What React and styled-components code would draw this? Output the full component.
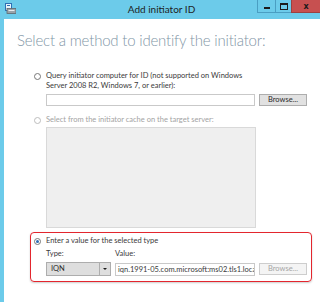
import React from "react";
import styled, { createGlobalStyle } from "styled-components";

const GlobalStyle = createGlobalStyle`
  html, body {
    margin: 0;
    padding: 0;
  }
  body {
    font-family: Lato, "Liberation Sans", sans-serif;
    overflow: hidden;
  }
`;

const Window = styled.div`
  width: 320px;
  height: 302px;
  background: #6ccbea;
  display: flex;
  flex-direction: column;
  overflow: hidden;
`;

const TitleBar = styled.div`
  height: 19px;
  display: grid;
  grid-template-columns: 1fr auto 1fr;
  align-items: start;
`;

const AppIcon = styled.div`
  padding: 3px 0 0 5px;
  line-height: 0;
`;

const Title = styled.div`
  font-size: 10px;
  line-height: 18px;
  color: #1e1e1e;
  padding-left: 3px;
`;

const Controls = styled.div`
  justify-self: end;
  display: flex;
`;

const CaptionButton = styled.div`
  width: ${(p) => p.$w}px;
  height: 13px;
  box-sizing: border-box;
  border: 1px solid ${(p) => (p.$close ? "#9c4141" : "#4a9ec2")};
  border-top: none;
  border-right: none;
  background: ${(p) => (p.$close ? "#c75050" : "#6ccbea")};
  display: flex;
  align-items: center;
  justify-content: center;
  font-family: "DejaVu Sans", sans-serif;
  font-size: 8px;
  font-weight: bold;
  color: #1b1b1b;
`;

const MinGlyph = styled.span`
  width: 6px;
  height: 2px;
  background: #1b1b1b;
  margin-top: 3px;
`;

const MaxGlyph = styled.span`
  width: 6px;
  height: 4px;
  border: 1px solid #1b1b1b;
  border-top-width: 2px;
`;

const Body = styled.div`
  flex: 1;
  margin-left: 4px;
  background: #fff;
  padding: 11px 0 0 13px;
`;

const Heading = styled.div`
  font-weight: 300;
  font-size: 15px;
  letter-spacing: -0.2px;
  line-height: 20px;
  color: #8296a6;
  white-space: nowrap;
`;

const Options = styled.div`
  margin: 20px 0 0 13px;
  width: 282px;
  display: flex;
  flex-direction: column;
`;

const Section = styled.div`
  box-sizing: border-box;
  border: 1px solid ${(p) => (p.$highlight ? "#e3262e" : "transparent")};
  border-radius: ${(p) => (p.$highlight ? "4px" : "0")};
  box-shadow: ${(p) => (p.$highlight ? "0 1px 2px rgba(0,0,0,0.2)" : "none")};
  padding: ${(p) => (p.$highlight ? "3px 3px 5px" : "0 3px")};
  margin-top: ${(p) => p.$mt || 0}px;
`;

const OptionRow = styled.div`
  display: flex;
  align-items: flex-start;
  gap: 5px;
`;

const Radio = styled.span`
  flex: none;
  width: 7px;
  height: 7px;
  margin-top: 2px;
  box-sizing: border-box;
  border-radius: 50%;
  border: 1px solid ${(p) => (p.$disabled ? "#bdbdbd" : "#777")};
  background: #fff;
  display: flex;
  align-items: center;
  justify-content: center;
  &::after {
    content: "";
    display: ${(p) => (p.$checked ? "block" : "none")};
    width: 3px;
    height: 3px;
    border-radius: 50%;
    background: #2d6db5;
  }
`;

const Label = styled.div`
  font-size: 7.5px;
  line-height: 10px;
  color: ${(p) => (p.$disabled ? "#a3a3a3" : "#3a3a3a")};
`;

const Indent = styled.div`
  margin: ${(p) => p.$mt || 0}px 0 0 12px;
`;

const FieldGrid = styled.div`
  display: grid;
  grid-template-columns: ${(p) => p.$cols};
  column-gap: 4px;
  align-items: center;
`;

const TextBox = styled.div`
  box-sizing: border-box;
  height: ${(p) => p.$h || 12}px;
  border: 1px solid #c9c9c9;
  background: #fff;
  font-size: 7.5px;
  line-height: ${(p) => (p.$h || 12) - 2}px;
  color: #3a3a3a;
  padding-left: 2px;
  white-space: nowrap;
  overflow: hidden;
`;

const Button = styled.div`
  box-sizing: border-box;
  height: 12px;
  border: 1px solid ${(p) => (p.$disabled ? "#cdcdcd" : "#adadad")};
  background: ${(p) => (p.$disabled ? "#f4f4f4" : "#e1e1e1")};
  color: ${(p) => (p.$disabled ? "#a5a5a5" : "#2a2a2a")};
  font-size: 7.5px;
  line-height: 10px;
  text-align: center;
`;

const ListBox = styled.div`
  box-sizing: border-box;
  width: 210px;
  height: 101px;
  border: 1px solid #d9d9d9;
  background: #efefef;
`;

const Select = styled.div`
  box-sizing: border-box;
  height: 14px;
  border: 1px solid #adadad;
  background: #dedede;
  display: flex;
  font-size: 7.5px;
  color: #2a2a2a;
`;

const SelectValue = styled.span`
  flex: 1;
  padding-left: 4px;
  line-height: 12px;
`;

const SelectArrow = styled.span`
  width: 10px;
  border-left: 1px solid #adadad;
  display: flex;
  align-items: center;
  justify-content: center;
  &::after {
    content: "";
    border-left: 2px solid transparent;
    border-right: 2px solid transparent;
    border-top: 2px solid #1b1b1b;
  }
`;

function AppGlyph() {
  return (
    <svg width="11" height="11" viewBox="0 0 11 11">
      <rect x="0.5" y="0.5" width="6" height="7" fill="#e8f4fb" stroke="#2f6fb3" />
      <rect x="2" y="2" width="3" height="1" fill="#2f6fb3" />
      <rect x="2" y="5.5" width="9" height="5" fill="#9aa3aa" stroke="#5d666d" strokeWidth="0.8" />
      <rect x="3.5" y="7" width="6" height="1" fill="#e9ecef" />
    </svg>
  );
}

function Option({ checked, disabled, children }) {
  return (
    <OptionRow>
      <Radio $checked={checked} $disabled={disabled} />
      <Label $disabled={disabled}>{children}</Label>
    </OptionRow>
  );
}

export default function App() {
  return (
    <Window>
      <GlobalStyle />
      <TitleBar>
        <AppIcon>
          <AppGlyph />
        </AppIcon>
        <Title>Add initiator ID</Title>
        <Controls>
          <CaptionButton $w={18}>
            <MinGlyph />
          </CaptionButton>
          <CaptionButton $w={16}>
            <MaxGlyph />
          </CaptionButton>
          <CaptionButton $w={29} $close>
            x
          </CaptionButton>
        </Controls>
      </TitleBar>
      <Body>
        <Heading>Select a method to identify the initiator:</Heading>
        <Options>
          <Section>
            <Option>
              Query initiator computer for ID (not supported on Windows
              <br />
              Server 2008 R2, Windows 7, or earlier):
            </Option>
            <Indent $mt={3}>
              <FieldGrid $cols="209px 48px">
                <TextBox />
                <Button>Browse...</Button>
              </FieldGrid>
            </Indent>
          </Section>
          <Section $mt={7}>
            <Option disabled>Select from the initiator cache on the target server:</Option>
            <Indent $mt={2}>
              <ListBox />
            </Indent>
          </Section>
          <Section $highlight $mt={3}>
            <Option checked>Enter a value for the selected type</Option>
            <Indent $mt={3}>
              <FieldGrid $cols="65px 140px 48px">
                <Label>Type:</Label>
                <Label>Value:</Label>
              </FieldGrid>
            </Indent>
            <Indent $mt={3}>
              <FieldGrid $cols="65px 140px 48px">
                <Select>
                  <SelectValue>IQN</SelectValue>
                  <SelectArrow />
                </Select>
                <TextBox $h={13}>iqn.1991-05.com.microsoft:ms02.tls1.loca</TextBox>
                <Button $disabled>Browse...</Button>
              </FieldGrid>
            </Indent>
          </Section>
        </Options>
      </Body>
    </Window>
  );
}
